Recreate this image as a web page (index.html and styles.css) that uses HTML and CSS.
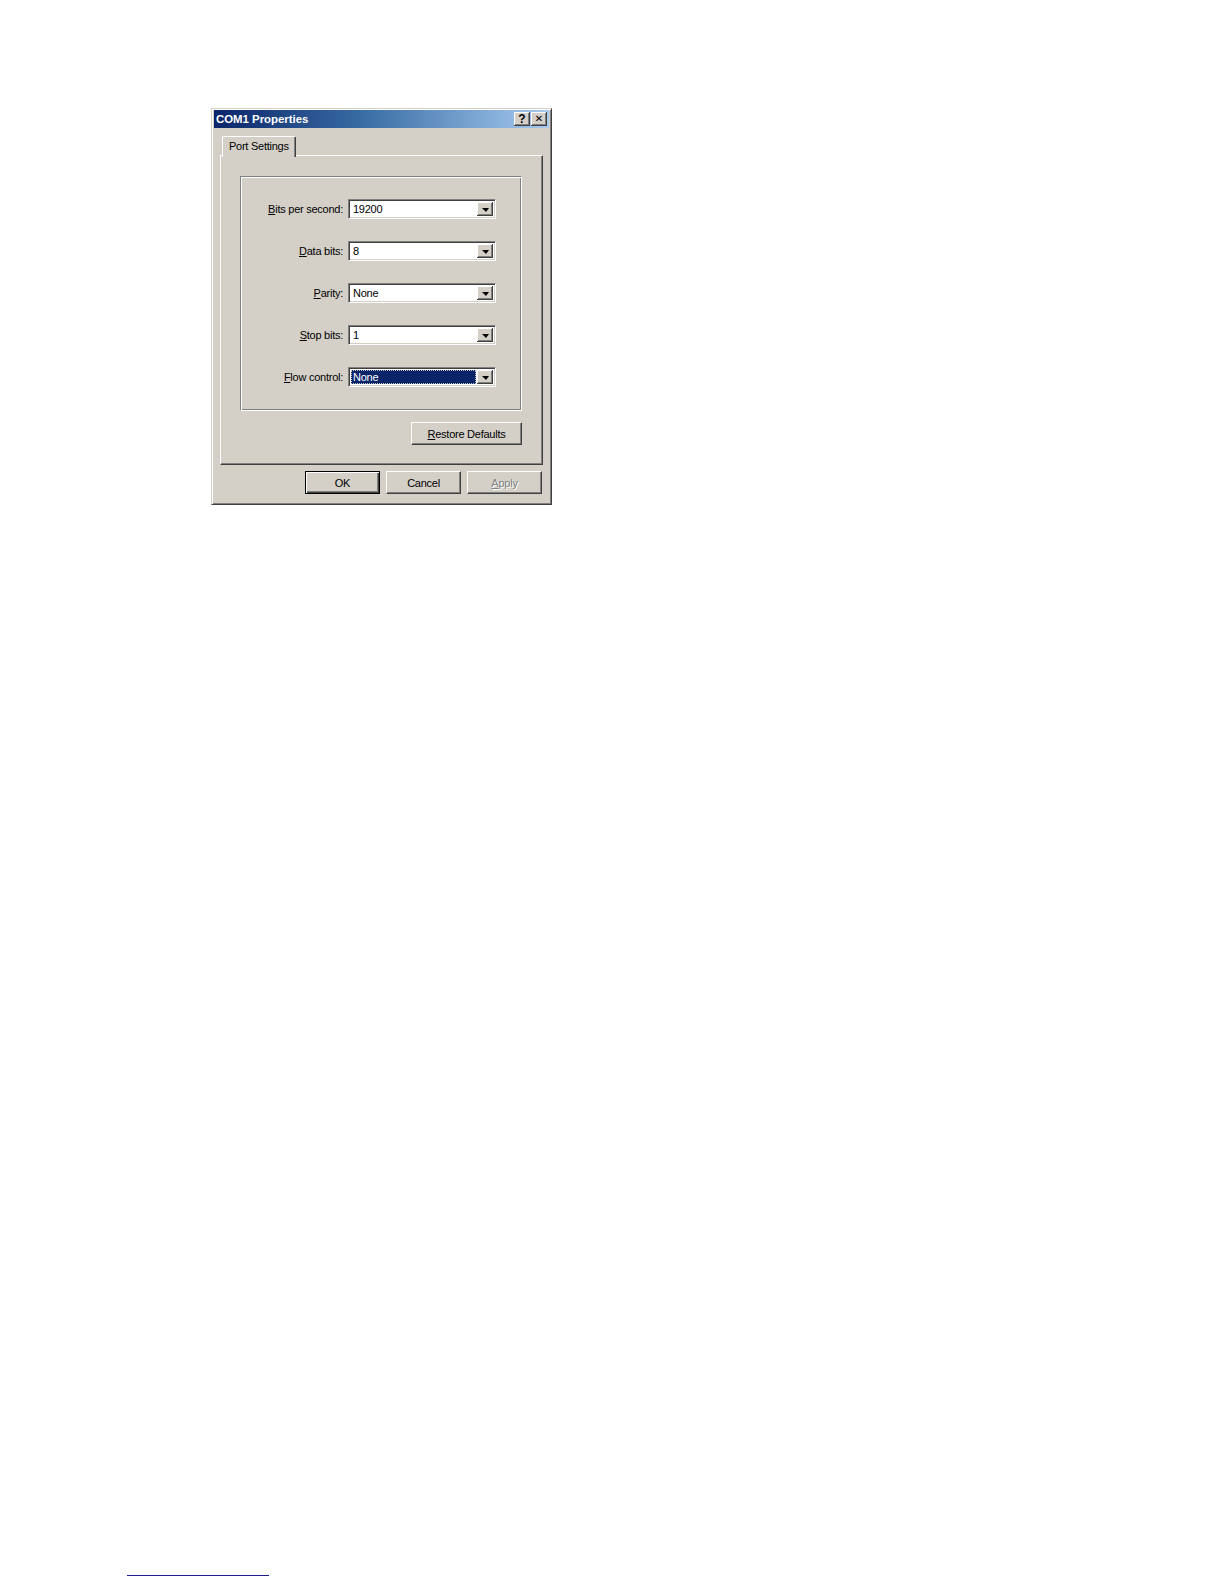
FILE: index.html
```html
<!DOCTYPE html>
<html>
<head>
<meta charset="utf-8">
<title>COM1 Properties</title>
<link rel="stylesheet" href="styles.css">
</head>
<body>
<div class="page">
  <div class="dialog">
    <div class="titlebar">
      <span class="title">COM1 Properties</span>
      <div class="tb-buttons">
        <span class="tb-btn tb-help">?</span>
        <span class="tb-btn tb-close">✕</span>
      </div>
    </div>
    <div class="dlg-body">
      <div class="tabs">
        <div class="tab">Port Settings</div>
      </div>
      <div class="panel">
        <div class="group">
          <div class="row">
            <label class="lbl"><u>B</u>its per second:</label>
            <div class="combo"><span class="val">19200</span><span class="drop"><i class="arrow"></i></span></div>
          </div>
          <div class="row">
            <label class="lbl"><u>D</u>ata bits:</label>
            <div class="combo"><span class="val">8</span><span class="drop"><i class="arrow"></i></span></div>
          </div>
          <div class="row">
            <label class="lbl"><u>P</u>arity:</label>
            <div class="combo"><span class="val">None</span><span class="drop"><i class="arrow"></i></span></div>
          </div>
          <div class="row">
            <label class="lbl"><u>S</u>top bits:</label>
            <div class="combo"><span class="val">1</span><span class="drop"><i class="arrow"></i></span></div>
          </div>
          <div class="row">
            <label class="lbl"><u>F</u>low control:</label>
            <div class="combo"><span class="val sel">None</span><span class="drop"><i class="arrow"></i></span></div>
          </div>
        </div>
        <div class="restore-row">
          <button class="btn btn-restore"><u>R</u>estore Defaults</button>
        </div>
      </div>
      <div class="actions">
        <button class="btn btn-default">OK</button>
        <button class="btn">Cancel</button>
        <button class="btn btn-disabled"><u>A</u>pply</button>
      </div>
    </div>
  </div>
  <div class="rule"></div>
</div>
</body>
</html>
```

FILE: styles.css
```css
html, body {
  margin: 0;
  padding: 0;
  background: #ffffff;
}

.page {
  padding: 108px 0 0 211px;
  height: 1584px;
  box-sizing: border-box;
  font-family: "Liberation Sans", Arial, sans-serif;
  font-size: 11px;
  letter-spacing: -0.25px;
  color: #000;
}

.dialog {
  width: 341px;
  height: 397px;
  box-sizing: border-box;
  background: #d4d0c8;
  border: 1px solid;
  border-color: #d4d0c8 #404040 #404040 #d4d0c8;
  box-shadow: inset 1px 1px #ffffff, inset -1px -1px #808080;
  padding: 1px 2px 2px 2px;
  display: flex;
  flex-direction: column;
}

.titlebar {
  height: 18px;
  background: linear-gradient(to right, #0a246a 0%, #3a6ea5 45%, #a6caf0 100%);
  display: flex;
  align-items: center;
  justify-content: space-between;
}

.title {
  color: #ffffff;
  font-weight: bold;
  font-size: 11.4px;
  letter-spacing: 0;
  padding-left: 2px;
  line-height: 18px;
}

.tb-buttons {
  display: flex;
  gap: 1px;
  padding-right: 2px;
}

.tb-btn {
  width: 16px;
  height: 14px;
  box-sizing: border-box;
  background: #d4d0c8;
  box-shadow: inset -1px -1px #404040, inset 1px 1px #ffffff, inset -2px -2px #808080;
  display: flex;
  align-items: center;
  justify-content: center;
  font-weight: bold;
  font-size: 12px;
  line-height: 1;
  letter-spacing: 0;
  color: #000;
}

.tb-close {
  font-size: 10px;
  font-family: "DejaVu Sans", sans-serif;
}

.dlg-body {
  flex: 1;
  display: flex;
  flex-direction: column;
  padding: 8px 6px 0 6px;
}

.tabs {
  display: flex;
  padding-left: 2px;
  height: 19px;
  position: relative;
  z-index: 1;
}

.tab {
  height: 21px;
  box-sizing: border-box;
  padding: 0 6px 0 6px;
  line-height: 18px;
  background: #d4d0c8;
  border-top: 1px solid #ffffff;
  border-left: 1px solid #ffffff;
  border-right: 1px solid #404040;
  box-shadow: inset -1px 0 #808080;
  border-radius: 2px 2px 0 0;
}

.panel {
  height: 310px;
  box-sizing: border-box;
  border: 1px solid;
  border-color: #ffffff #404040 #404040 #ffffff;
  box-shadow: inset -1px -1px #808080;
  padding: 20px 20px 0 19px;
  display: flex;
  flex-direction: column;
}

.group {
  height: 235px;
  box-sizing: border-box;
  border: 1px solid;
  border-color: #808080 #ffffff #ffffff #808080;
  box-shadow: inset 1px 1px #ffffff, inset -1px -1px #808080;
  padding: 22px 0 0 0;
  display: flex;
  flex-direction: column;
  gap: 22px;
}

.row {
  display: grid;
  grid-template-columns: 102px 148px;
  column-gap: 5px;
  align-items: center;
  height: 20px;
}

.lbl {
  text-align: right;
  white-space: nowrap;
}

.combo {
  height: 20px;
  box-sizing: border-box;
  background: #ffffff;
  border: 1px solid;
  border-color: #808080 #ffffff #ffffff #808080;
  box-shadow: inset 1px 1px #404040, inset -1px -1px #d4d0c8;
  padding: 2px 2px 2px 2px;
  display: flex;
}

.val {
  flex: 1;
  padding-left: 2px;
  line-height: 14px;
  margin-right: 1px;
  white-space: nowrap;
}

.val.sel {
  background: #0a246a;
  color: #ffffff;
  outline: 1px dotted #c0c0c0;
  outline-offset: -1px;
}

.drop {
  width: 16px;
  height: 14px;
  box-sizing: border-box;
  background: #d4d0c8;
  box-shadow: inset -1px -1px #404040, inset 1px 1px #ffffff, inset -2px -2px #808080;
  display: flex;
  align-items: center;
  justify-content: center;
}

.arrow {
  display: block;
  width: 0;
  height: 0;
  border-left: 4px solid transparent;
  border-right: 3px solid transparent;
  border-top: 4px solid #000;
  margin-top: 1px;
}

.restore-row {
  display: flex;
  justify-content: flex-end;
  padding-top: 11px;
}

.btn {
  font-family: "Liberation Sans", Arial, sans-serif;
  font-size: 11px;
  letter-spacing: -0.25px;
  color: #000;
  background: #d4d0c8;
  border: 1px solid;
  border-color: #ffffff #404040 #404040 #ffffff;
  box-shadow: inset -1px -1px #808080;
  width: 75px;
  height: 23px;
  padding: 0;
  margin: 0;
  box-sizing: border-box;
  line-height: 20px;
  text-align: center;
}

.btn-restore {
  width: 111px;
}

.btn-default {
  border: 1px solid #000;
  box-shadow: inset 1px 1px #ffffff, inset -1px -1px #404040, inset -2px -2px #808080;
}

.btn-disabled {
  color: #808080;
  text-shadow: 1px 1px 0 #ffffff;
}

.actions {
  display: flex;
  justify-content: flex-end;
  gap: 6px;
  padding-top: 6px;
  padding-right: 1px;
}

.rule {
  width: 142px;
  height: 1px;
  background: #1c1c8a;
  margin-top: 1070px;
  margin-left: -84px;
}
```
